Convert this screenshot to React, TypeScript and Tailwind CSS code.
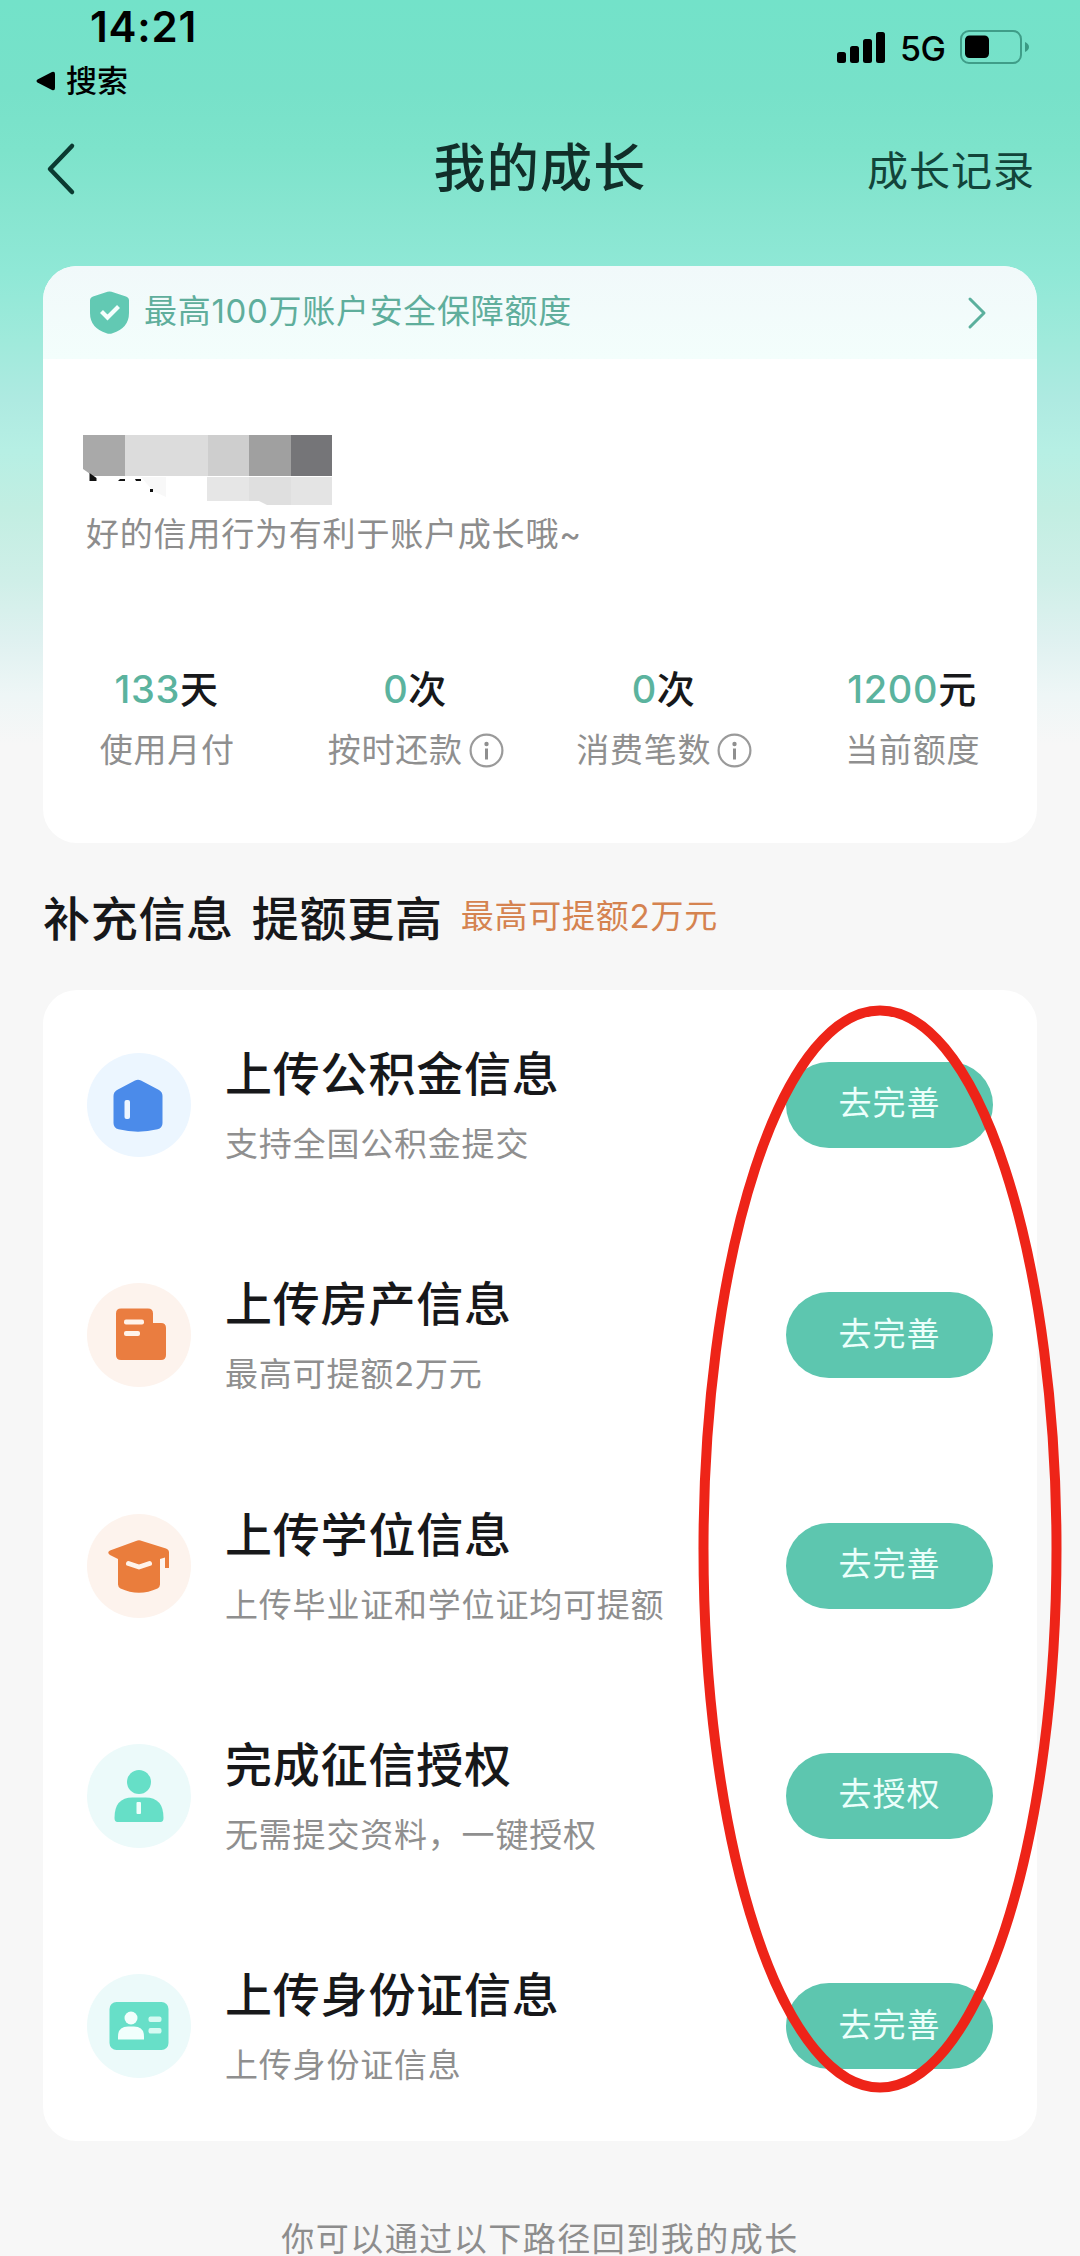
import React from 'react';

interface Stat {
  value: string;
  unit: string;
  label: string;
  hasInfo?: boolean;
}

interface Task {
  title: string;
  desc: string;
  action: string;
  iconBg: string;
  icon: React.ReactNode;
}

const stats: Stat[] = [
  { value: '133', unit: '天', label: '使用月付' },
  { value: '0', unit: '次', label: '按时还款', hasInfo: true },
  { value: '0', unit: '次', label: '消费笔数', hasInfo: true },
  { value: '1200', unit: '元', label: '当前额度' },
];

const HouseIcon = () => (
  <svg className="w-[104px] h-[104px]" viewBox="0 0 104 104">
    <path d="M48 27.500q3-1.600 6 0l18 9.500q3.500 2 3.500 6v27q0 5-5 6.300Q51 81 31.500 76.300 26.500 75 26.500 70V43q0-4 3.500-6z" fill="#4b8bea" />
    <rect x="37.500" y="47" width="5.500" height="19" rx="2" fill="#eef6ff" />
  </svg>
);

const DocumentIcon = () => (
  <svg className="w-[104px] h-[104px]" viewBox="0 0 104 104">
    <path d="M34 25.500h27q5 0 5 5V40h8q5 0 5 5v27q0 5-5 5H34q-5 0-5-5V30.500q0-5 5-5z" fill="#ea7d40" />
    <rect x="37" y="36.500" width="20" height="5" rx="2" fill="#fff3ea" />
    <rect x="37" y="48" width="16" height="5" rx="2" fill="#fff3ea" />
  </svg>
);

const DegreeIcon = () => (
  <svg className="w-[104px] h-[104px]" viewBox="0 0 104 104">
    <path d="M49 27q3-1.300 6 0l24 7.500q3 1 3 4V54h-4V43.500l-5 1.500v25.500q0 2.500-2.500 4Q52 83 33.500 74.500q-2.500-1.500-2.500-4V45l-8-4q-3.500-2.500 0-4.500z" fill="#ea7d3c" />
    <path d="M41.500 49.500 52 53 62.500 49.500" fill="none" stroke="#fff3ea" strokeWidth="5" strokeLinecap="round" strokeLinejoin="round" />
  </svg>
);

const PersonIcon = () => (
  <svg className="w-[104px] h-[104px]" viewBox="0 0 104 104">
    <circle cx="52" cy="38" r="12" fill="#66dfc7" />
    <path d="M27.500 74q0-20.500 18-20.500h13q18 0 18 20.500 0 4-3 4h-43q-3 0-3-4z" fill="#66dfc7" />
    <rect x="49.500" y="58" width="4.500" height="12" rx="1" fill="#effefb" />
  </svg>
);

const IdCardIcon = () => (
  <svg className="w-[104px] h-[104px]" viewBox="0 0 104 104">
    <rect x="22.500" y="28" width="59" height="48" rx="7" fill="#67dfc8" />
    <circle cx="44" cy="44" r="6.500" fill="#f1fffc" />
    <path d="M31 65.500v-3q0-10 10-10h6q10 0 10 10v3z" fill="#f1fffc" />
    <rect x="61.500" y="42.500" width="13" height="5.500" rx="2" fill="#d5faf2" />
    <rect x="61.500" y="54" width="13" height="5.500" rx="2" fill="#d5faf2" />
  </svg>
);

const tasks: Task[] = [
  { title: '上传公积金信息', desc: '支持全国公积金提交', action: '去完善', iconBg: 'bg-[#ecf6ff]', icon: <HouseIcon /> },
  { title: '上传房产信息', desc: '最高可提额2万元', action: '去完善', iconBg: 'bg-[#fdf3ed]', icon: <DocumentIcon /> },
  { title: '上传学位信息', desc: '上传毕业证和学位证均可提额', action: '去完善', iconBg: 'bg-[#fdf3ed]', icon: <DegreeIcon /> },
  { title: '完成征信授权', desc: '无需提交资料，一键授权', action: '去授权', iconBg: 'bg-[#ecfafa]', icon: <PersonIcon /> },
  { title: '上传身份证信息', desc: '上传身份证信息', action: '去完善', iconBg: 'bg-[#ecfafa]', icon: <IdCardIcon /> },
];

const StatusBar = () => (
  <div className="h-[108px] flex justify-between text-black">
    <div className="pl-[36px]">
      <p className="pl-[54px] pt-[5px] text-[42px] leading-[44px] font-semibold tracking-[0.8px]">14:21</p>
      <div className="flex items-center gap-[10px] mt-[9px]">
        <svg className="w-[20px] h-[20px]" viewBox="0 0 20 20">
          <path d="M1.500 8.500 16 1q3-1 3 2v14q0 3-3 2L1.500 11.500q-2-1.500 0-3z" fill="currentColor" />
        </svg>
        <span className="text-[31px] leading-[46px] font-medium">搜索</span>
      </div>
    </div>
    <div className="flex items-start pr-[50px] pt-[29px]">
      <svg className="w-[48px] h-[36px] mr-[15px]" viewBox="0 0 48 36" fill="currentColor">
        <rect x="0" y="23" width="9" height="11" rx="2.500" />
        <rect x="13" y="17" width="9" height="17" rx="2.500" />
        <rect x="26" y="10" width="9" height="24" rx="2.500" />
        <rect x="39" y="3" width="9" height="31" rx="2.500" />
      </svg>
      <span className="text-[34px] leading-[40px] w-[45px] tracking-[-0.5px] font-medium">5G</span>
      <svg className="w-[70px] h-[36px] ml-[15px]" viewBox="0 0 70 36">
        <rect x="1" y="2" width="60" height="32" rx="8" fill="none" stroke="#3f9d88" strokeWidth="2" />
        <rect x="5" y="6.500" width="24" height="22.500" rx="4.500" fill="#000" />
        <path d="M65 13q4 2 4 5t-4 5z" fill="#3a9a84" />
      </svg>
    </div>
  </div>
);

const InfoIcon = () => (
  <svg className="w-[35px] h-[35px]" viewBox="0 0 35 35">
    <circle cx="17.500" cy="17.500" r="15.900" fill="none" stroke="#9a9a9a" strokeWidth="2.200" />
    <circle cx="17.500" cy="11" r="2.200" fill="#8f8f8f" />
    <path d="M17.500 15.500v11" stroke="#8f8f8f" strokeWidth="3" />
  </svg>
);

// Pixelated cover over the account name
const MaskedName = () => (
  <svg className="w-[250px] h-[70px]" viewBox="0 0 250 70">
    <path d="M0 0h42v41H10L0 34z" fill="#a9a9a9" />
    <rect x="42" width="83" height="41" fill="#dcdcdc" />
    <rect x="125" width="41" height="41" fill="#cecece" />
    <rect x="166" width="42" height="41" fill="#a0a0a0" />
    <rect x="208" width="41" height="41" fill="#757578" />
    <path d="M58 42h25v20L70 56z" fill="#f8f8f8" />
    <rect x="124" y="42" width="42" height="24" fill="#e6e6e6" />
    <path d="M166 42h42v28h-24l-8-4h-10z" fill="#dfdfdf" />
    <rect x="208" y="42" width="41" height="28" fill="#e4e4e4" />
    <path d="M6.500 38l7 5v3h-7zM35 46l2-2h5v2zM52 44h6v2h-5zM67 54h3v3h-3z" fill="#111" />
  </svg>
);

const App: React.FC = () => {
  return (
    <div className='relative w-[1080px] h-[2256px] overflow-hidden bg-[#f7f7f7] font-["Inter","Noto_Sans_CJK_SC",sans-serif] text-[#17181a]'>
      <div className="bg-[linear-gradient(180deg,#73e2c9_0px,#77e1c9_90px,#7de3cb_150px,#87e5d0_210px,#8fe8d6_270px,#9feadb_340px,#aeeae1_400px,#b6efe4_450px,#c2eee2_510px,#cfefe8_580px,#dff1f0_640px,#eef6f6_695px,#f7f7f7_745px)]">
        <StatusBar />

        {/* Header */}
        <div className="h-[158px] pl-[45px] pr-[45px] flex items-start justify-between">
          <div className="w-[168px] pt-[34px]">
            <svg className="w-[32px] h-[54px]" viewBox="0 0 32 54">
              <path d="M27 4 5 27l22 23" fill="none" stroke="#0b3a31" strokeWidth="4.500" strokeLinecap="round" strokeLinejoin="round" />
            </svg>
          </div>
          <h1 className="pt-[23px] text-[52px] leading-[76px] font-medium tracking-[1.2px] text-[#112e29]">我的成长</h1>
          <span className="pt-[33px] text-[41px] leading-[60px] tracking-[1px] text-[#12443a]">成长记录</span>
        </div>

        {/* Account card */}
        <div className="mx-[43px] h-[577px] rounded-[34px] bg-white overflow-hidden">
          <div className="h-[93px] pl-[47px] pr-[49px] flex items-center bg-linear-to-b from-[#f1f9fa] to-[#f3fefc]">
            <svg className="w-[39px] h-[43px] shrink-0" viewBox="0 0 39 43">
              <path d="M17.500.8q2-.8 4 0L36 5.500q3 1 3 4V22q0 15-16.500 20.200-3 1-6 0Q0 37 0 22V9.500q0-3 3-4z" fill="#62c9b3" />
              <path d="M11.500 20.500l6 6 11-11" fill="none" stroke="#f4fffd" strokeWidth="4.200" />
            </svg>
            <span className="ml-[15px] text-[33px] leading-[48px] tracking-[0.7px] text-[#5fae9c] mb-[3px]">最高100万账户安全保障额度</span>
            <svg className="w-[22px] h-[34px] ml-auto" viewBox="0 0 22 34">
              <path d="M4 3l14 14L4 31" fill="none" stroke="#5bb09d" strokeWidth="3" strokeLinecap="round" strokeLinejoin="round" />
            </svg>
          </div>
          <div className="pt-[76px] pl-[40px]">
            <MaskedName />
            <p className="pl-[3px] mt-[5px] text-[33px] leading-[48px] tracking-[0.8px] text-[#8d8d8d]">好的信用行为有利于账户成长哦~</p>
          </div>
          <div className="grid grid-cols-4 mt-[103px]">
            {stats.map((stat) => (
              <div key={stat.label} className="flex flex-col items-center">
                <p className="pr-[2px] text-[38px] leading-[56px] font-medium">
                  <span className="tracking-[0.7px] text-[#5bb39e]">{stat.value}</span>
                  {stat.unit}
                </p>
                <div className="flex items-center gap-[6px] mt-[9px] text-[33px] leading-[48px] tracking-[0.8px] text-[#8f8f8f]">
                  {stat.label}
                  {stat.hasInfo && <InfoIcon />}
                </div>
              </div>
            ))}
          </div>
        </div>
      </div>

      {/* Section title */}
      <div className="h-[147px] pt-[4px] pl-[43px] flex items-center">
        <h2 className="flex gap-[18px] text-[47px] leading-[60px] font-medium tracking-[0.7px]">
          <span>补充信息</span>
          <span>提额更高</span>
        </h2>
        <span className="ml-[18px] mb-[3px] text-[33px] tracking-[0.8px] text-[#d58350]">最高可提额2万元</span>
      </div>

      {/* Task list */}
      <div className="relative mx-[43px] rounded-[34px] bg-white">
        {tasks.map((task) => (
          <div key={task.title} className="h-[230.300px] pl-[44px] pr-[44px] flex items-center">
            <div className={`w-[104px] h-[104px] rounded-full shrink-0 ${task.iconBg}`}>{task.icon}</div>
            <div className="ml-[34px] pb-[2px] flex-1">
              <h3 className="text-[47px] leading-[68px] font-medium tracking-[0.8px]">{task.title}</h3>
              <p className="mt-[12px] text-[33px] leading-[48px] tracking-[0.8px] text-[#8f8f8f]">{task.desc}</p>
            </div>
            <button className="w-[207px] h-[86px] pb-[2px] shrink-0 rounded-full bg-[#5dc6af] text-[33px] tracking-[1px] text-[#ecfffb]">{task.action}</button>
          </div>
        ))}

        {/* Hand-drawn highlight over the buttons */}
        <svg className="absolute left-[655px] top-[15px] w-[366px] h-[1088px]" viewBox="0 0 366 1088">
          <ellipse cx="182" cy="544" rx="176.500" ry="538.500" fill="none" stroke="#ee2418" strokeWidth="10" />
        </svg>
      </div>

      <p className="mt-[81px] text-center whitespace-nowrap text-[33px] leading-[34px] tracking-[1.5px] text-[#8d8d8d]">你可以通过以下路径回到我的成长</p>
    </div>
  );
};

export default App;
